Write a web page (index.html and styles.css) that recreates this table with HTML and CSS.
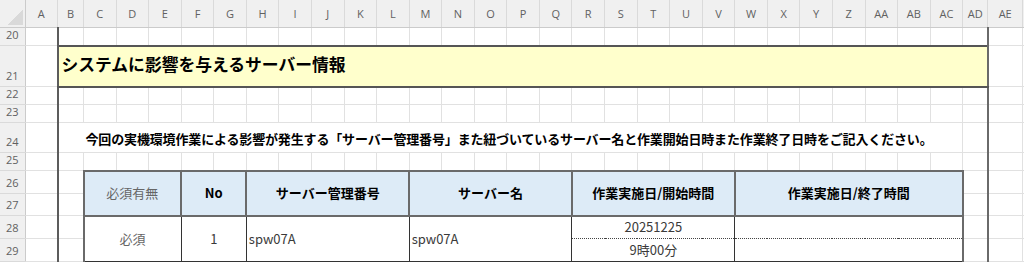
FILE: index.html
```html
<!DOCTYPE html>
<html lang="ja">
<head>
    <meta charset="UTF-8">
    <meta name="viewport" content="width=device-width, initial-scale=1.0">
    <title>システムに影響を与えるサーバー情報</title>
    <link rel="stylesheet" href="styles.css">
</head>
<body>
    <table class="sheet">
        <colgroup>
            <col class="c-rh">
            <col class="c-a">
            <col class="c-b">
            <col span="27" class="c-std">
            <col class="c-ad">
            <col class="c-ae">
            <col class="c-af">
        </colgroup>
        <thead>
            <tr>
                <th class="corner"><span class="select-all"></span></th>
                <th>A</th><th>B</th><th>C</th><th>D</th><th>E</th><th>F</th><th>G</th><th>H</th>
                <th>I</th><th>J</th><th>K</th><th>L</th><th>M</th><th>N</th><th>O</th><th>P</th>
                <th>Q</th><th>R</th><th>S</th><th>T</th><th>U</th><th>V</th><th>W</th><th>X</th>
                <th>Y</th><th>Z</th><th>AA</th><th>AB</th><th>AC</th><th>AD</th><th>AE</th><th></th>
            </tr>
        </thead>
        <tbody>
            <tr class="r-20">
                <th class="rh">20</th>
                <td></td><td class="fl"></td>
                <td></td><td></td><td></td><td></td><td></td><td></td><td></td><td></td><td></td>
                <td></td><td></td><td></td><td></td><td></td><td></td><td></td><td></td><td></td>
                <td></td><td></td><td></td><td></td><td></td><td></td><td></td><td></td><td></td>
                <td class="fr"></td><td></td><td></td>
            </tr>
            <tr class="r-21">
                <th class="rh">21</th>
                <td></td>
                <td class="title fl fr" colspan="29">システムに影響を与えるサーバー情報</td>
                <td></td><td></td>
            </tr>
            <tr class="r-22">
                <th class="rh">22</th>
                <td></td><td class="fl"></td>
                <td></td><td></td><td></td><td></td><td></td><td></td><td></td><td></td><td></td>
                <td></td><td></td><td></td><td></td><td></td><td></td><td></td><td></td><td></td>
                <td></td><td></td><td></td><td></td><td></td><td></td><td></td><td></td><td></td>
                <td class="fr"></td><td></td><td></td>
            </tr>
            <tr class="r-23">
                <th class="rh">23</th>
                <td></td><td class="fl"></td>
                <td></td><td></td><td></td><td></td><td></td><td></td><td></td><td></td><td></td>
                <td></td><td></td><td></td><td></td><td></td><td></td><td></td><td></td><td></td>
                <td></td><td></td><td></td><td></td><td></td><td></td><td></td><td></td><td></td>
                <td class="fr"></td><td></td><td></td>
            </tr>
            <tr class="r-24">
                <th class="rh">24</th>
                <td></td>
                <td class="note fl" colspan="28">今回の実機環境作業による影響が発生する「サーバー管理番号」また紐づいているサーバー名と作業開始日時また作業終了日時をご記入ください。</td>
                <td class="fr"></td><td></td><td></td>
            </tr>
            <tr class="r-25">
                <th class="rh">25</th>
                <td></td><td class="fl"></td>
                <td></td><td></td><td></td><td></td><td></td><td></td><td></td><td></td><td></td>
                <td></td><td></td><td></td><td></td><td></td><td></td><td></td><td></td><td></td>
                <td></td><td></td><td></td><td></td><td></td><td></td><td></td><td></td><td></td>
                <td class="fr"></td><td></td><td></td>
            </tr>
            <tr class="r-26">
                <th class="rh">26</th>
                <td></td><td class="fl"></td>
                <td class="hd muted" colspan="3" rowspan="2">必須有無</td>
                <td class="hd" colspan="2" rowspan="2">No</td>
                <td class="hd" colspan="5" rowspan="2">サーバー管理番号</td>
                <td class="hd" colspan="5" rowspan="2">サーバー名</td>
                <td class="hd" colspan="5" rowspan="2">作業実施日/開始時間</td>
                <td class="hd" colspan="7" rowspan="2">作業実施日/終了時間</td>
                <td class="fr"></td><td></td><td></td>
            </tr>
            <tr class="r-27">
                <th class="rh">27</th>
                <td></td><td class="fl"></td>
                <td class="fr"></td><td></td><td></td>
            </tr>
            <tr class="r-28">
                <th class="rh">28</th>
                <td></td><td class="fl"></td>
                <td class="cell first muted mid" colspan="3" rowspan="2">必須</td>
                <td class="cell mid" colspan="2" rowspan="2">1</td>
                <td class="cell" colspan="5" rowspan="2">spw07A</td>
                <td class="cell" colspan="5" rowspan="2">spw07A</td>
                <td class="cell mid upper" colspan="5">20251225</td>
                <td class="cell last upper" colspan="7"></td>
                <td class="fr"></td><td></td><td></td>
            </tr>
            <tr class="r-29">
                <th class="rh">29</th>
                <td></td><td class="fl"></td>
                <td class="cell mid lower" colspan="5">9時00分</td>
                <td class="cell last lower" colspan="7"></td>
                <td class="fr"></td><td></td><td></td>
            </tr>
            <tr class="r-30">
                <th class="rh"></th>
                <td></td><td class="fl"></td>
                <td></td><td></td><td></td><td></td><td></td><td></td><td></td><td></td><td></td>
                <td></td><td></td><td></td><td></td><td></td><td></td><td></td><td></td><td></td>
                <td></td><td></td><td></td><td></td><td></td><td></td><td></td><td></td><td></td>
                <td class="fr"></td><td></td><td></td>
            </tr>
        </tbody>
    </table>
</body>
</html>
```

FILE: styles.css
```css
body {
    margin: 0;
    background-color: #ffffff;
    overflow: hidden;
    font-family: 'Noto Sans CJK JP', sans-serif;
}

/* sheet grid */
.sheet {
    table-layout: fixed;
    border-collapse: collapse;
    width: 1063px;
}
.c-rh { width: 25px; }
.c-a { width: 32.5px; }
.c-b { width: 26px; }
.c-std { width: 32.57px; }
.c-ad { width: 25px; }
.c-ae { width: 35px; }
.c-af { width: 40px; }

.sheet td {
    border: 1px solid #e1e1e1;
    padding: 0;
    font-size: 13px;
    line-height: 16px;
    color: #3a3a3a;
    white-space: nowrap;
}

/* column and row headings */
.sheet th {
    background-color: #f0f0f0;
    color: #616161;
    font-family: 'Open Sans', 'Noto Sans', sans-serif;
    font-size: 11px;
    font-weight: normal;
    padding: 0;
}
.sheet thead th {
    height: 27px;
    border-right: 1px solid #dadada;
    border-bottom: 1px solid #cbcbcb;
    text-align: center;
    vertical-align: middle;
}
.sheet thead th.corner {
    text-align: right;
    vertical-align: bottom;
    border-right-color: #cbcbcb;
}
.select-all {
    display: inline-block;
    width: 15px;
    height: 15px;
    margin: 0 2px 2px 0;
    vertical-align: bottom;
    background: linear-gradient(135deg, transparent 50%, #d9d9d9 50%);
}
.sheet th.rh {
    border-right: 1px solid #cbcbcb;
    border-bottom: 1px solid #dadada;
    text-align: center;
    vertical-align: bottom;
    line-height: 14px;
    padding-bottom: 3px;
}

/* row heights */
.r-20 { height: 17px; }
.r-21 { height: 41px; }
.r-22 { height: 17px; }
.r-23 { height: 18px; }
.r-24 { height: 30px; }
.r-25 { height: 17px; }
.r-26 { height: 23px; }
.r-27 { height: 22px; }
.r-28 { height: 23px; }
.r-29 { height: 23px; }
.r-30 { height: 23px; }

/* outer frame of the section (B .. AD) */
.sheet td.fl { border-left: 2px solid #5c5c5c; }
.sheet td.fr { border-right: 2px solid #6a6a6a; }

.sheet td.title {
    background-color: #ffffcc;
    border-top: 2px solid #555555;
    border-bottom: 2px solid #555555;
    color: #000000;
    font-size: 16.8px;
    font-weight: bold;
    line-height: 20px;
    padding: 0 0 4px 3px;
    vertical-align: middle;
}

.sheet td.note {
    color: #000000;
    font-weight: bold;
    letter-spacing: -0.15px;
    padding: 0 0 5px 27px;
    vertical-align: bottom;
}

/* server table */
.sheet td.hd {
    background-color: #ddebf7;
    border: 2px solid #6a6a6a;
    color: #000000;
    font-weight: bold;
    text-align: center;
    vertical-align: middle;
}
.sheet td.cell {
    border: 1px solid #333333;
    padding-left: 2px;
    vertical-align: middle;
}
.sheet td.first { border-left: 2px solid #6a6a6a; }
.sheet td.last { border-right: 2px solid #6a6a6a; }
.sheet td.muted {
    color: #666666;
    font-weight: normal;
}
.sheet td.mid {
    text-align: center;
    padding-left: 0;
}
.sheet td.upper { border-bottom: 1px dotted #444444; }
.sheet td.lower { border-top: none; }
```
